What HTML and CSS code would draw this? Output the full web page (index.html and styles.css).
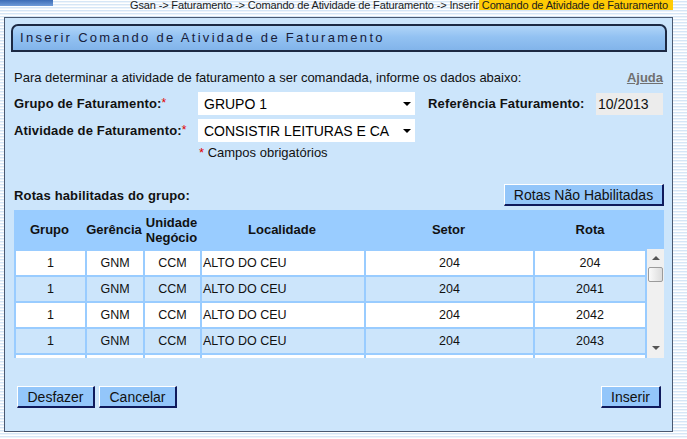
FILE: index.html
```html
<!DOCTYPE html>
<html lang="pt-BR">
<head>
<meta charset="utf-8">
<title>Inserir Comando de Atividade de Faturamento</title>
<link rel="stylesheet" href="styles.css">
</head>
<body>
<div class="topbar">
  <div class="logo-bar"></div>
  <div class="crumbs">Gsan -&gt; Faturamento -&gt; Comando de Atividade de Faturamento -&gt; Inserir<span class="crumb-current"> Comando de Atividade de Faturamento</span></div>
</div>
<div class="panel">
  <div class="title-bar">Inserir Comando de Atividade de Faturamento</div>
  <div class="content">
    <div class="intro-row">
      <span>Para determinar a atividade de faturamento a ser comandada, informe os dados abaixo:</span>
      <a class="help" href="#">Ajuda</a>
    </div>
    <div class="field-row">
      <span class="label">Grupo de Faturamento:<span class="req">*</span></span>
      <div class="select"><span class="select-text">GRUPO 1</span><span class="caret"></span></div>
      <span class="label ref-label">Referência Faturamento:</span>
      <div class="readonly">10/2013</div>
    </div>
    <div class="field-row second">
      <span class="label">Atividade de Faturamento:<span class="req">*</span></span>
      <div class="select"><span class="select-text">CONSISTIR LEITURAS E CA</span><span class="caret"></span></div>
    </div>
    <div class="required-note"><span class="req-plain">*</span> Campos obrigatórios</div>
    <div class="routes-row">
      <span class="label">Rotas habilitadas do grupo:</span>
      <button class="btn btn-wide" type="button">Rotas Não Habilitadas</button>
    </div>
    <div class="grid">
      <div class="grid-head">
        <div class="hc c1">Grupo</div>
        <div class="hc c2">Gerência</div>
        <div class="hc c3">Unidade<br>Negócio</div>
        <div class="hc c4">Localidade</div>
        <div class="hc c5">Setor</div>
        <div class="hc c6">Rota</div>
        <div class="hc c7"></div>
      </div>
      <div class="grid-body">
        <div class="rows-wrap">
          <table class="rows">
            <colgroup>
              <col class="w1"><col class="w2"><col class="w3"><col class="w4"><col class="w5"><col class="w6">
            </colgroup>
            <tbody>
              <tr class="odd"><td>1</td><td>GNM</td><td>CCM</td><td class="left">ALTO DO CEU</td><td>204</td><td>204</td></tr>
              <tr class="even"><td>1</td><td>GNM</td><td>CCM</td><td class="left">ALTO DO CEU</td><td>204</td><td>2041</td></tr>
              <tr class="odd"><td>1</td><td>GNM</td><td>CCM</td><td class="left">ALTO DO CEU</td><td>204</td><td>2042</td></tr>
              <tr class="even"><td>1</td><td>GNM</td><td>CCM</td><td class="left">ALTO DO CEU</td><td>204</td><td>2043</td></tr>
              <tr class="odd"><td></td><td></td><td></td><td class="left"></td><td></td><td></td></tr>
            </tbody>
          </table>
        </div>
        <div class="scrollbar">
          <div class="arrow-up"></div>
          <div class="thumb"></div>
          <div class="track-fill"></div>
          <div class="arrow-down"></div>
        </div>
      </div>
    </div>
    <div class="actions">
      <div class="actions-left">
        <button class="btn btn-desfazer" type="button">Desfazer</button>
        <button class="btn btn-cancelar" type="button">Cancelar</button>
      </div>
      <button class="btn btn-inserir" type="button">Inserir</button>
    </div>
  </div>
</div>
</body>
</html>
```

FILE: styles.css
```css
html, body {
  margin: 0;
  padding: 0;
}

body {
  width: 687px;
  height: 439px;
  overflow: hidden;
  font-family: "Liberation Sans", Arial, sans-serif;
  color: #000;
  background: repeating-linear-gradient(to bottom, #ffffff 0, #ffffff 1px, #d6e6f6 1px, #d6e6f6 2px, #eef4fb 2px, #eef4fb 3px);
}

.topbar {
  height: 17px;
  display: flex;
  justify-content: space-between;
  align-items: flex-start;
}

.logo-bar {
  width: 53px;
  height: 6px;
  background: linear-gradient(to bottom, #3c6cb6, #6f9bd8);
}

.crumbs {
  margin-right: 14px;
  height: 10px;
  line-height: 10px;
  font-size: 11px;
  letter-spacing: -0.15px;
  color: #1c1c1c;
  white-space: nowrap;
  overflow: hidden;
}

.crumb-current {
  background: #ffcb05;
  padding-right: 5px;
}

.panel {
  margin-left: 4px;
  width: 667px;
  height: 413px;
  border: 1px solid #4a5870;
  background: #cce5fb;
}

.title-bar {
  margin: 6px 0 0 6px;
  width: 645px;
  height: 24px;
  padding-left: 7px;
  border: 2px solid #1c2943;
  border-radius: 7px 7px 0 0;
  background: linear-gradient(to bottom, #b0d5f8 0%, #93c2f2 45%, #82b4ea 100%);
  font-size: 13px;
  letter-spacing: 2.3px;
  line-height: 24px;
  color: #17203a;
  white-space: nowrap;
}

.content {
  padding: 0 8px 0 9px;
}

.intro-row {
  margin-top: 19px;
  height: 14px;
  line-height: 14px;
  display: flex;
  justify-content: space-between;
  font-size: 13px;
  color: #111;
}

.help {
  margin-right: 1px;
  font-size: 13px;
  font-weight: bold;
  color: #707070;
  text-decoration: underline;
}

.field-row {
  margin-top: 7px;
  height: 23px;
  display: flex;
  align-items: center;
}

.field-row.second {
  margin-top: 4px;
}

.label {
  font-size: 13px;
  font-weight: bold;
  letter-spacing: 0.15px;
  color: #111;
  white-space: nowrap;
}

.field-row .label {
  width: 184px;
}

.req {
  color: #e00000;
  font-weight: normal;
  font-size: 12px;
  vertical-align: top;
}

.select {
  width: 217px;
  height: 23px;
  box-sizing: border-box;
  background: #ffffff;
  display: flex;
  align-items: center;
  padding: 0 4px 0 6px;
  font-size: 14px;
  color: #000;
  overflow: hidden;
}

.select-text {
  flex: 1;
  white-space: nowrap;
  overflow: hidden;
}

.caret {
  flex: none;
  margin-left: 3px;
  width: 0;
  height: 0;
  border-left: 4px solid transparent;
  border-right: 4px solid transparent;
  border-top: 4px solid #000;
}

.field-row .ref-label {
  width: 168px;
  margin-left: 13px;
}

.readonly {
  width: 67px;
  height: 22px;
  box-sizing: border-box;
  padding-left: 2px;
  background: #ececec;
  font-size: 14px;
  line-height: 22px;
  color: #111;
}

.required-note {
  margin-top: 4px;
  padding-left: 185px;
  height: 14px;
  line-height: 14px;
  font-size: 13px;
  color: #111;
}

.req-plain {
  color: #e00000;
}

.routes-row {
  margin-top: 24px;
  display: flex;
  justify-content: space-between;
  align-items: center;
  height: 22px;
}

.btn {
  height: 22px;
  box-sizing: border-box;
  margin: 0;
  padding: 0;
  border-style: solid;
  border-width: 1px 2px 2px 1px;
  border-color: #ffffff #0f1a5c #0f1a5c #ffffff;
  background: #93c6fa;
  font-family: "Liberation Sans", Arial, sans-serif;
  font-size: 14px;
  color: #111;
  line-height: 18px;
}

.btn-wide {
  width: 160px;
}

.grid {
  margin-top: 4px;
  width: 650px;
}

.grid-head {
  display: flex;
  height: 39px;
  background: #99ccff;
}

.hc {
  display: flex;
  align-items: center;
  justify-content: center;
  text-align: center;
  font-size: 13px;
  font-weight: bold;
  line-height: 15px;
  color: #111;
}

.c1 { width: 71px; }
.c2 { width: 58px; }
.c3 { width: 57px; }
.c4 { width: 164px; }
.c5 { width: 169px; }
.c6 { width: 114px; }
.c7 { width: 17px; }

.grid-body {
  display: flex;
  height: 109px;
}

.rows-wrap {
  width: 633px;
  height: 109px;
  overflow: hidden;
  background: #99ccff;
}

.rows {
  width: 633px;
  table-layout: fixed;
  border-collapse: separate;
  border-spacing: 2px;
  background: #99ccff;
}

.w1 { width: 69px; }
.w2 { width: 56px; }
.w3 { width: 55px; }
.w4 { width: 162px; }
.w5 { width: 167px; }
.w6 { width: 110px; }

.rows td {
  height: 24px;
  padding: 0;
  font-size: 12.5px;
  text-align: center;
  color: #111;
  white-space: nowrap;
  overflow: hidden;
}

.rows td.left {
  text-align: left;
  padding-left: 1px;
}

.rows tr.odd td {
  background: #ffffff;
}

.rows tr.even td {
  background: #cce5fb;
}

.scrollbar {
  width: 17px;
  height: 109px;
  box-sizing: border-box;
  background: #f0f0f0;
  display: flex;
  flex-direction: column;
  align-items: center;
}

.arrow-up {
  margin-top: 7px;
  width: 0;
  height: 0;
  border-left: 4px solid transparent;
  border-right: 4px solid transparent;
  border-bottom: 4px solid #555;
}

.thumb {
  margin-top: 7px;
  width: 15px;
  height: 15px;
  box-sizing: border-box;
  border: 1px solid #9b9b9b;
  border-radius: 2px;
  background: linear-gradient(to right, #fafafa, #dcdcdc);
}

.track-fill {
  flex: 1;
}

.arrow-down {
  margin-bottom: 8px;
  width: 0;
  height: 0;
  border-left: 4px solid transparent;
  border-right: 4px solid transparent;
  border-top: 4px solid #555;
}

.actions {
  margin-top: 28px;
  display: flex;
  justify-content: space-between;
  padding: 0 3px;
}

.actions-left {
  display: flex;
  gap: 4px;
}

.btn-desfazer { width: 78px; }
.btn-cancelar { width: 78px; }
.btn-inserir { width: 60px; }
```
